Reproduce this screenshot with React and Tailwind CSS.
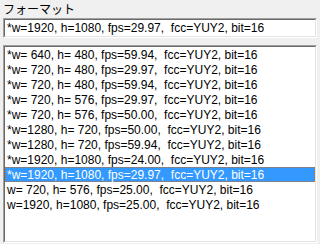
import React, { useState } from "react";

const formats = [
	"*w= 640, h= 480, fps=59.94,  fcc=YUY2, bit=16",
	"*w= 720, h= 480, fps=29.97,  fcc=YUY2, bit=16",
	"*w= 720, h= 480, fps=59.94,  fcc=YUY2, bit=16",
	"*w= 720, h= 576, fps=29.97,  fcc=YUY2, bit=16",
	"*w= 720, h= 576, fps=50.00,  fcc=YUY2, bit=16",
	"*w=1280, h= 720, fps=50.00,  fcc=YUY2, bit=16",
	"*w=1280, h= 720, fps=59.94,  fcc=YUY2, bit=16",
	"*w=1920, h=1080, fps=24.00,  fcc=YUY2, bit=16",
	"*w=1920, h=1080, fps=29.97,  fcc=YUY2, bit=16",
	"w= 720, h= 576, fps=25.00,  fcc=YUY2, bit=16",
	"w=1920, h=1080, fps=25.00,  fcc=YUY2, bit=16",
];

// windows style sunken border (2 px)
function Sunken({ className, children }) {
	return (
		<div className={"border border-t-[#a0a0a0] border-l-[#a0a0a0] border-b-white border-r-white " + className}>
			<div className="h-full w-full border border-t-[#696969] border-l-[#696969] border-b-[#e3e3e3] border-r-[#e3e3e3] bg-white">
				{children}
			</div>
		</div>
	);
}

export default function App() {
	const [selected, setSelected] = useState(8);

	return (
		<div className="h-[244px] w-[320px] overflow-hidden bg-[#f0f0f0] px-[3px] pt-[2px] font-['Liberation_Sans',Arial,sans-serif] text-[12px] text-black">
			<div className="h-[16px] font-['Noto_Sans_CJK_JP',sans-serif] text-[12px] leading-[14px]">フォーマット</div>

			<Sunken className="h-[20px] w-[314px]">
				<div className="whitespace-pre pl-[2px] leading-[17px]">{formats[selected]}</div>
			</Sunken>

			<Sunken className="mt-[7px] h-[198px] w-[314px]">
				<ul className="flex flex-col">
					{formats.map((f, i) => (
						<li
							key={i}
							onClick={() => setSelected(i)}
							className={
								"h-[15px] cursor-default whitespace-pre border pl-[1px] leading-[14px] " +
								(i === selected ? "border-dotted border-[#c86a1e] bg-[#3399ff] text-white" : "border-transparent")
							}
						>
							{f}
						</li>
					))}
				</ul>
			</Sunken>
		</div>
	);
}
